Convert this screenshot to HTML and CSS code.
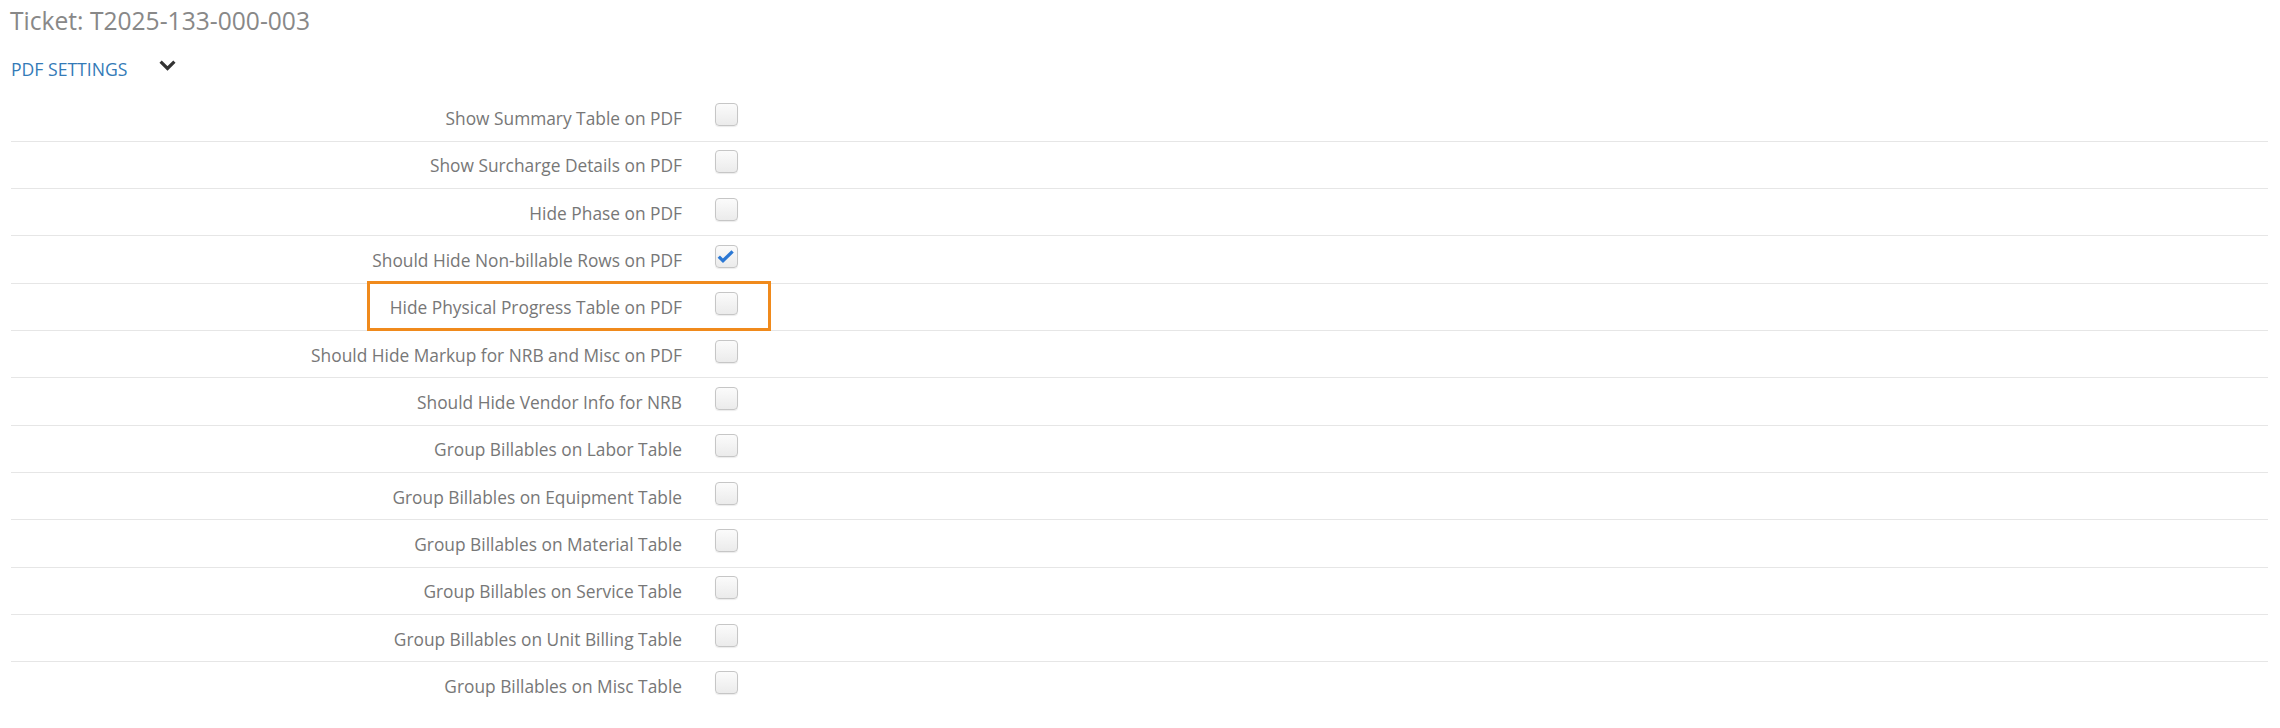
FILE: index.html
```html
<!DOCTYPE html>
<html lang="en">
<head>
<meta charset="utf-8">
<title>Ticket: T2025-133-000-003</title>
<link rel="stylesheet" href="styles.css">
</head>
<body>
<div class="page">
  <h1 class="title">Ticket: T2025-133-000-003</h1>
  <div class="section-head">
    <span class="section-title">PDF SETTINGS</span>
    <svg class="chevron" width="17" height="11" viewBox="0 0 17 11" aria-hidden="true">
      <polyline points="1.6,1.6 8.5,8.5 15.4,1.6" fill="none" stroke="#333" stroke-width="3.2" stroke-linejoin="miter" stroke-linecap="butt"/>
    </svg>
  </div>
  <div class="settings">
    <div class="row"><label class="label">Show Summary Table on PDF</label><span class="box"></span></div>
    <div class="row"><label class="label">Show Surcharge Details on PDF</label><span class="box"></span></div>
    <div class="row"><label class="label">Hide Phase on PDF</label><span class="box"></span></div>
    <div class="row"><label class="label">Should Hide Non-billable Rows on PDF</label><span class="box checked"><svg width="23" height="23" viewBox="0 0 23 23" aria-hidden="true"><polyline points="3.8,11.6 8,15.8 17.6,6.4" fill="none" stroke="#2b78d4" stroke-width="3.3" stroke-linecap="butt" stroke-linejoin="miter"/></svg></span></div>
    <div class="row highlighted"><label class="label">Hide Physical Progress Table on PDF</label><span class="box"></span><span class="highlight"></span></div>
    <div class="row"><label class="label">Should Hide Markup for NRB and Misc on PDF</label><span class="box"></span></div>
    <div class="row"><label class="label">Should Hide Vendor Info for NRB</label><span class="box"></span></div>
    <div class="row"><label class="label">Group Billables on Labor Table</label><span class="box"></span></div>
    <div class="row"><label class="label">Group Billables on Equipment Table</label><span class="box"></span></div>
    <div class="row"><label class="label">Group Billables on Material Table</label><span class="box"></span></div>
    <div class="row"><label class="label">Group Billables on Service Table</label><span class="box"></span></div>
    <div class="row"><label class="label">Group Billables on Unit Billing Table</label><span class="box"></span></div>
    <div class="row last"><label class="label">Group Billables on Misc Table</label><span class="box"></span></div>
  </div>
</div>
</body>
</html>
```

FILE: styles.css
```css
* { box-sizing: border-box; }

html, body {
  margin: 0;
  padding: 0;
  background: #fff;
}

body {
  font-family: "Open Sans", "Liberation Sans", sans-serif;
  color: #777;
}

.page {
  padding: 0 12px 0 11px;
}

.title {
  margin: 0 0 0 -1px;
  padding-top: 7.5px;
  font-size: 24.6px;
  line-height: 26.4px;
  font-weight: 400;
  color: #888;
}

.section-head {
  display: flex;
  align-items: flex-start;
  margin-top: 23px;
  height: 37.5px;
}

.section-title {
  font-size: 17.6px;
  line-height: 24.76px;
  color: #337ab7;
}

.chevron {
  display: block;
  margin-left: 32px;
  margin-top: 2.6px;
}

.settings {
  display: flex;
  flex-direction: column;
}

.row {
  position: relative;
  display: flex;
  align-items: flex-start;
  height: 47.33px;
  border-bottom: 1px solid #e6e6e6;
}

.row.last {
  border-bottom: none;
}

.label {
  width: 671px;
  flex: none;
  text-align: right;
  font-size: 17.33px;
  line-height: 24.76px;
  padding-top: 11.5px;
  color: #777;
}

.box {
  flex: none;
  display: block;
  width: 23px;
  height: 23px;
  margin-left: 32.5px;
  margin-top: 8.5px;
  border: 1px solid #c6c6c6;
  border-radius: 4px;
  background: linear-gradient(#fbfbfb, #ebebeb);
  box-shadow: 0 1px 1px rgba(0, 0, 0, 0.08);
}

.box svg {
  display: block;
  margin: -1px 0 0 -1px;
}

.highlight {
  position: absolute;
  left: 356px;
  top: -3px;
  width: 404px;
  height: 50px;
  border: 3px solid #f08a1c;
  pointer-events: none;
}
```
